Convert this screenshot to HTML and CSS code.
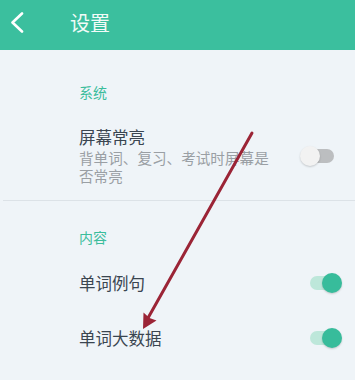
FILE: index.html
```html
<!DOCTYPE html>
<html lang="zh">
<head>
<meta charset="utf-8">
<link rel="stylesheet" href="styles.css">
</head>
<body>
<div class="page">
  <header class="bar">
    <svg class="back" width="20" height="24" viewBox="0 0 20 24"><path d="M11 1.5 L1.5 10.5 L11 19.5" fill="none" stroke="#ffffff" stroke-width="2.6" stroke-linecap="round" stroke-linejoin="round"/></svg>
    <div class="title">设置</div>
  </header>
  <div class="section">
    <div class="label">系统</div>
    <div class="row multi">
      <div class="text">
        <div class="name">屏幕常亮</div>
        <div class="desc">背单词、复习、考试时屏幕是否常亮</div>
      </div>
      <div class="toggle off"><span class="track"></span><span class="knob"></span></div>
    </div>
  </div>
  <div class="divider"></div>
  <div class="section second">
    <div class="label">内容</div>
    <div class="row">
      <div class="text"><div class="name">单词例句</div></div>
      <div class="toggle on"><span class="track"></span><span class="knob"></span></div>
    </div>
    <div class="row">
      <div class="text"><div class="name">单词大数据</div></div>
      <div class="toggle on"><span class="track"></span><span class="knob"></span></div>
    </div>
  </div>
  <svg class="arrow" width="355" height="380" viewBox="0 0 355 380">
    <line x1="252" y1="133" x2="148" y2="318" stroke="#9b2436" stroke-width="3" stroke-linecap="round"/>
    <polygon points="143,329 143.5,312.5 149.5,318 156.5,320.5" fill="#9b2436"/>
  </svg>
</div>
</body>
</html>
```

FILE: styles.css
```css
html, body {
  margin: 0;
  padding: 0;
  background: #eff4f8;
}
.page {
  position: relative;
  width: 355px;
  height: 380px;
  overflow: hidden;
  font-family: "Noto Sans CJK SC", "Noto Sans", sans-serif;
  background: #eff4f8;
}
.bar {
  height: 50px;
  background: #3bbf9e;
  display: flex;
  align-items: center;
  padding-left: 11px;
  box-sizing: border-box;
}
.back {
  display: block;
  margin-top: -2px;
}
.title {
  margin-left: 39px;
  color: #f2fbf8;
  font-size: 20px;
  line-height: 24px;
  margin-top: -4px;
}
.section {
  padding-left: 79px;
  padding-right: 13px;
}
.label {
  margin-top: 32px;
  font-size: 14px;
  line-height: 20px;
  color: #3bbd9c;
}
.second .label {
  margin-top: 26px;
}
.row {
  display: flex;
  align-items: center;
  justify-content: space-between;
}
.row.multi {
  margin-top: 24px;
  padding-bottom: 15px;
}
.second .row {
  height: 55px;
}
.second .label + .row {
  margin-top: 8px;
}
.text {
  width: 200px;
}
.name {
  font-size: 16.5px;
  line-height: 22px;
  color: #3a4550;
}
.desc {
  font-size: 14.6px;
  line-height: 18px;
  color: #9a9fa4;
  margin-top: 1px;
  width: 194px;
}
.divider {
  height: 1px;
  background: #dce2e7;
  margin-left: 3px;
}
.toggle {
  position: relative;
  width: 42px;
  height: 20px;
}
.track {
  position: absolute;
  left: 3px;
  width: 31px;
  top: 3px;
  height: 14px;
  border-radius: 7px;
}
.knob {
  position: absolute;
  top: 0;
  width: 20px;
  height: 20px;
  border-radius: 50%;
  box-shadow: 0 1px 2px rgba(0, 0, 0, 0.18);
}
.off .track {
  background: #bcbec0;
}
.off .knob {
  left: 0;
  background: #f2f2f2;
}
.on .track {
  left: 10px;
  background: #bde7da;
}
.on .knob {
  right: 0;
  background: #37bc9b;
}
.arrow {
  position: absolute;
  left: 0;
  top: 0;
  pointer-events: none;
}
```
